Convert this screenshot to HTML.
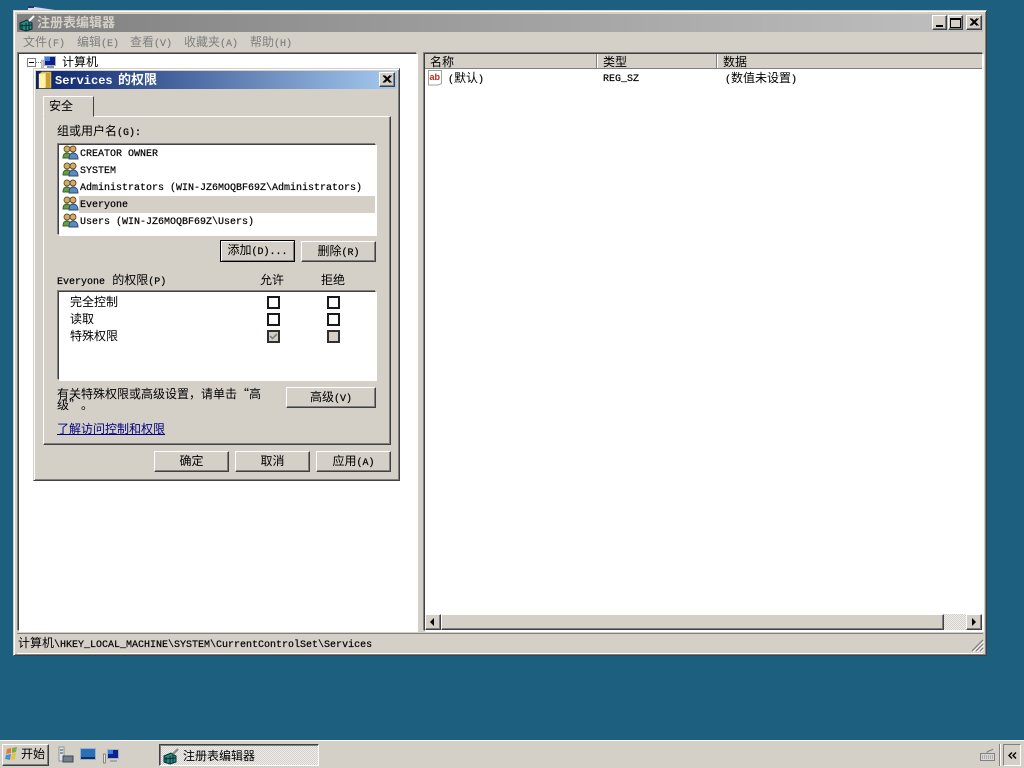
<!DOCTYPE html>
<html><head><meta charset="utf-8"><style>
html,body{margin:0;padding:0;width:1024px;height:768px;overflow:hidden;background:#1c5f7e}
*{box-sizing:border-box}
body{font-family:"Liberation Mono","WenQuanYi Zen Hei","Noto Sans CJK SC",monospace;font-size:12px;color:#000}
.a{position:absolute}
.t{position:absolute;white-space:nowrap;line-height:14px;height:14px}
.m{font-size:10px;-webkit-text-stroke:.2px currentColor}
.q{display:inline-block;width:12px;font-family:"WenQuanYi Zen Hei","Noto Sans CJK SC",sans-serif}
.raised{background:#d4d0c8;border:1px solid;border-color:#fff #404040 #404040 #fff;box-shadow:inset -1px -1px 0 #808080}
.sunk{background:#fff;border:1px solid;border-color:#404040 #fff #fff #404040;box-shadow:-1px -1px 0 #808080,1px 1px 0 #fff}
.btn{position:absolute;background:#d4d0c8;border:1px solid;border-color:#fff #404040 #404040 #fff;box-shadow:inset -1px -1px 0 #808080;text-align:center;line-height:21px;white-space:nowrap}
.cb{position:absolute;width:13px;height:13px;background:#fff;border:2px solid #1a1a1a}
.dither{background-color:#eee;background-image:linear-gradient(45deg,#d4d0c8 25%,transparent 25%,transparent 75%,#d4d0c8 75%),linear-gradient(45deg,#d4d0c8 25%,transparent 25%,transparent 75%,#d4d0c8 75%);background-size:2px 2px;background-position:0 0,1px 1px}
</style></head><body>

<svg class="a" style="left:27px;top:5px" width="30" height="6"><path d="M1 1 L28 5 L1 5Z" fill="#d8d8e8"/><path d="M1 1h6v2H1z" fill="#30306a"/></svg>

<!-- main window -->
<div class="a" style="left:13px;top:10px;width:974px;height:646px;background:#d4d0c8;border:1px solid;border-color:#d4d0c8 #404040 #404040 #d4d0c8;box-shadow:inset 1px 1px 0 #fff,inset -1px -1px 0 #808080"></div>
<div class="a" style="left:17px;top:14px;width:966px;height:18px;background:linear-gradient(90deg,#808080,#c0c0c0)"></div>
<svg class="a" style="left:19px;top:15px" width="16" height="17" viewBox="0 0 16 17"><path d="M1 8 L8 5 L13 8 L13 14 L7 16 L1 14Z" fill="#2a8a7a" stroke="#0b2b3a"/><path d="M3 9v6M7 8v8M10 7v8M1 11l12-1" stroke="#0b2b3a" fill="none"/><path d="M10 6 L15 1" stroke="#fff" stroke-width="2"/></svg>
<div class="t" style="left:37px;top:17px;color:#d4d0c8;font-weight:bold;font-size:13px">注册表编辑器</div>

<div class="btn" style="left:932px;top:15px;width:15px;height:15px"></div><div class="a" style="left:936px;top:25px;width:7px;height:2px;background:#000"></div>
<div class="btn" style="left:948px;top:15px;width:15px;height:15px"></div><div class="a" style="left:950px;top:18px;width:11px;height:10px;border:1px solid #000;border-top-width:2px"></div>
<div class="btn" style="left:966px;top:15px;width:16px;height:15px"></div>
<svg class="a" style="left:969px;top:18px" width="10" height="9"><path d="M1 0.5L8 7.5M2.5 0.5L9.5 7.5M8 0.5L1 7.5M9.5 0.5L2.5 7.5" stroke="#000" fill="none"/></svg>

<div class="t" style="left:23px;top:36px;color:#808080">文件<span class="m">(F)</span></div>
<div class="t" style="left:77px;top:36px;color:#808080">编辑<span class="m">(E)</span></div>
<div class="t" style="left:130px;top:36px;color:#808080">查看<span class="m">(V)</span></div>
<div class="t" style="left:184px;top:36px;color:#808080">收藏夹<span class="m">(A)</span></div>
<div class="t" style="left:250px;top:36px;color:#808080">帮助<span class="m">(H)</span></div>

<!-- tree -->
<div class="a sunk" style="left:18px;top:53px;width:399px;height:578px"></div>
<div class="a" style="left:27px;top:58px;width:9px;height:9px;border:1px solid #808080;background:#fff"></div>
<div class="a" style="left:29px;top:62px;width:5px;height:1px;background:#000"></div>
<svg class="a" style="left:36px;top:55px" width="22" height="14"><path d="M0 7.5h5" stroke="#808080" stroke-dasharray="1 1"/><rect x="5.500" y="5" width="2" height="8" fill="#c8d0d8" stroke="#888" stroke-width=".5"/><rect x="8.500" y="1.500" width="11" height="9" fill="#10208c" stroke="#a8b0c0"/><rect x="9" y="2" width="5" height="4" fill="#3a80e0"/><path d="M11 12h7" stroke="#8898a8" stroke-width="2"/></svg>
<div class="t" style="left:62px;top:56px">计算机</div>

<!-- list pane -->
<div class="a sunk" style="left:424px;top:53px;width:559px;height:578px"></div>
<div class="a" style="left:425px;top:54px;width:557px;height:15px;background:#d4d0c8;border-bottom:1px solid #808080"></div>
<div class="a" style="left:596px;top:54px;width:1px;height:14px;background:#808080"></div><div class="a" style="left:597px;top:54px;width:1px;height:14px;background:#fff"></div>
<div class="a" style="left:716px;top:54px;width:1px;height:14px;background:#808080"></div><div class="a" style="left:717px;top:54px;width:1px;height:14px;background:#fff"></div>
<div class="t" style="left:430px;top:56px">名称</div>
<div class="t" style="left:603px;top:56px">类型</div>
<div class="t" style="left:723px;top:56px">数据</div>
<svg class="a" style="left:427px;top:69px" width="17" height="17" viewBox="0 0 17 17"><path d="M1.500 1.500h13v13l-3 1.500h-10z" fill="#fff" stroke="#a0a0a0"/><text x="2.500" y="11" font-family="Liberation Sans" font-size="9" font-weight="bold" fill="#c02818">ab</text></svg>
<div class="t" style="left:448px;top:72px"><span class="m">(</span>默认<span class="m">)</span></div>
<div class="t m" style="left:603px;top:73px">REG_SZ</div>
<div class="t" style="left:725px;top:72px"><span class="m">(</span>数值未设置<span class="m">)</span></div>

<!-- scrollbar -->
<div class="a dither" style="left:425px;top:614px;width:557px;height:16px"></div>
<div class="btn" style="left:425px;top:614px;width:16px;height:16px"></div>
<svg class="a" style="left:430px;top:618px" width="6" height="8"><path d="M4 0v8L0 4z"/></svg>
<div class="btn" style="left:441px;top:614px;width:503px;height:16px"></div>
<div class="btn" style="left:966px;top:614px;width:16px;height:16px"></div>
<svg class="a" style="left:972px;top:618px" width="6" height="8"><path d="M0 0v8l4-4z"/></svg>

<!-- status -->
<div class="a" style="left:17px;top:633px;width:966px;height:21px;background:#d4d0c8;border-top:1px solid #808080;border-bottom:1px solid #fff"></div>
<div class="t" style="left:18px;top:637px">计算机<span class="m">\HKEY_LOCAL_MACHINE\SYSTEM\CurrentControlSet\Services</span></div>
<svg class="a" style="left:971px;top:639px" width="13" height="13"><path d="M1 12L12 1M5 12L12 5M9 12L12 9" stroke="#808080" stroke-width="1.300" fill="none"/><path d="M2 13L13 2M6 13L13 6M10 13L13 10" stroke="#fff" fill="none"/></svg>

<!-- dialog -->
<div class="a" style="left:33px;top:68px;width:367px;height:413px;background:#d4d0c8;border:1px solid;border-color:#d4d0c8 #404040 #404040 #d4d0c8;box-shadow:inset 1px 1px 0 #fff,inset -1px -1px 0 #808080"></div>
<div class="a" style="left:36px;top:71px;width:361px;height:18px;background:linear-gradient(90deg,#0a246a,#a6caf0)"></div>
<svg class="a" style="left:38px;top:71px" width="15" height="18"><path d="M1 3 L4 1 L13 1 L13 17 L1 17Z" fill="#f2d878" stroke="#a89040" stroke-width=".7"/><path d="M1 3h6v14H1z" fill="#fff2b0"/><path d="M8 2h4v15H8z" fill="#c8a030"/></svg>
<div class="t" style="left:55px;top:74px;color:#fff;font-weight:bold;font-size:13px;width:120px"><span style="font-size:12px">Services</span></div>
<div class="t" style="left:118px;top:74px;color:#fff;font-weight:bold;font-size:13px">的权限</div>
<div class="btn" style="left:379px;top:72px;width:16px;height:15px"></div>
<svg class="a" style="left:382px;top:75px" width="10" height="9"><path d="M1 0.500L8 7.500M2.500 0.500L9.500 7.500M8 0.500L1 7.500M9.500 0.500L2.500 7.500" stroke="#000" fill="none"/></svg>

<!-- tab panel -->
<div class="a" style="left:43px;top:116px;width:348px;height:329px;background:#d4d0c8;border:1px solid;border-color:#fff #404040 #404040 #fff;box-shadow:inset -1px -1px 0 #808080"></div>
<div class="a" style="left:43px;top:96px;width:51px;height:21px;background:#d4d0c8;border:1px solid;border-color:#fff #404040 #d4d0c8 #fff"></div>
<div class="t" style="left:49px;top:100px">安全</div>

<div class="t" style="left:57px;top:125px">组或用户名<span class="m">(G):</span></div>
<div class="a sunk" style="left:58px;top:144px;width:318px;height:91px"></div>
<div class="a" style="left:79px;top:196px;width:296px;height:17px;background:#d4d0c8"></div>
<svg width="0" height="0" style="position:absolute"><defs><g id="u"><circle cx="5" cy="4" r="3" fill="#d8a868" stroke="#5a5a2a" stroke-width=".9"/><path d="M1 13c0-4 2-5 4-5s4 1 4 5z" fill="#60a048" stroke="#3a5a2a" stroke-width=".9"/><circle cx="11" cy="4" r="3" fill="#d8a868" stroke="#5a4a2a" stroke-width=".9"/><path d="M7 14c0-5 2-6 4-6s5 1 5 6z" fill="#5a8ac0" stroke="#2a4a6a" stroke-width=".9"/></g></defs></svg>
<svg class="a" style="left:62px;top:145px" width="17" height="16"><use href="#u"/></svg>
<svg class="a" style="left:62px;top:162px" width="17" height="16"><use href="#u"/></svg>
<svg class="a" style="left:62px;top:179px" width="17" height="16"><use href="#u"/></svg>
<svg class="a" style="left:62px;top:196px" width="17" height="16"><use href="#u"/></svg>
<svg class="a" style="left:62px;top:213px" width="17" height="16"><use href="#u"/></svg>
<div class="t m" style="left:80px;top:148px">CREATOR OWNER</div>
<div class="t m" style="left:80px;top:165px">SYSTEM</div>
<div class="t m" style="left:80px;top:182px">Administrators (WIN-JZ6MOQBF69Z\Administrators)</div>
<div class="t m" style="left:80px;top:199px">Everyone</div>
<div class="t m" style="left:80px;top:216px">Users (WIN-JZ6MOQBF69Z\Users)</div>

<div class="btn" style="left:220px;top:240px;width:75px;height:22px;border:1px solid #000;box-shadow:inset 1px 1px 0 #fff,inset -1px -1px 0 #808080;line-height:21px">添加<span class="m">(D)...</span></div>
<div class="btn" style="left:301px;top:241px;width:75px;height:21px">删除<span class="m">(R)</span></div>

<div class="t" style="left:57px;top:274px"><span class="m">Everyone</span> 的权限<span class="m">(P)</span></div>
<div class="t" style="left:260px;top:274px">允许</div>
<div class="t" style="left:321px;top:274px">拒绝</div>

<div class="a sunk" style="left:58px;top:291px;width:318px;height:89px"></div>
<div class="t" style="left:70px;top:296px">完全控制</div>
<div class="t" style="left:70px;top:313px">读取</div>
<div class="t" style="left:70px;top:330px">特殊权限</div>
<div class="cb" style="left:267px;top:296px"></div>
<div class="cb" style="left:327px;top:296px"></div>
<div class="cb" style="left:267px;top:313px"></div>
<div class="cb" style="left:327px;top:313px"></div>
<div class="cb" style="left:267px;top:330px;background:#d4d0c8;border-color:#303030"></div>
<svg class="a" style="left:269px;top:332px" width="9" height="9"><path d="M1 4l2.500 2.500L8 2" stroke="#808080" stroke-width="1.600" fill="none"/></svg>
<div class="cb" style="left:327px;top:330px;background:#d4d0c8;border-color:#303030"></div>

<div class="t" style="left:57px;top:387px">有关特殊权限或高级设置，请单击<span class="q" style="text-align:right">“</span>高</div>
<div class="t" style="left:57px;top:398px">级<span class="q">”</span>。</div>
<div class="btn" style="left:286px;top:387px;width:90px;height:21px">高级<span class="m">(V)</span></div>
<div class="t" style="left:57px;top:423px;color:#000080;text-decoration:underline">了解访问控制和权限</div>

<div class="btn" style="left:154px;top:451px;width:75px;height:21px">确定</div>
<div class="btn" style="left:235px;top:451px;width:75px;height:21px">取消</div>
<div class="btn" style="left:316px;top:451px;width:75px;height:21px">应用<span class="m">(A)</span></div>

<!-- taskbar -->
<div class="a" style="left:0;top:740px;width:1024px;height:28px;background:#d4d0c8;border-top:1px solid #fff"></div>
<div class="btn" style="left:2px;top:744px;width:47px;height:22px"></div>
<svg class="a" style="left:4px;top:746px" width="16" height="17" viewBox="0 0 16 17"><path d="M3 3l4-1 0 5-5 1z" fill="#e87830"/><path d="M8 2l5-1-1 5-4 1z" fill="#78b040"/><path d="M2 9l5-1-1 6-5-1z" fill="#4890d8"/><path d="M8 8l4-1-1 6-4 1z" fill="#f0c030"/></svg>
<div class="t" style="left:21px;top:748px">开始</div>
<svg class="a" style="left:57px;top:746px" width="17" height="18"><path d="M2 1h5v14H2z" fill="#e0e4e8" stroke="#8898a0"/><path d="M3 4h3M3 7h3" stroke="#404850"/><rect x="6" y="10" width="10" height="6" fill="#708088" stroke="#404850"/></svg>
<svg class="a" style="left:80px;top:748px" width="16" height="13"><rect x=".5" y=".5" width="15" height="11" fill="#2a70b8" stroke="#9ab0c8"/><path d="M1 10h14" stroke="#10305a" stroke-width="2"/></svg>
<svg class="a" style="left:103px;top:749px" width="16" height="15"><rect x="0.500" y="5" width="2" height="9" fill="#e8e8d8" stroke="#888"/><rect x="4.500" y=".5" width="11" height="9" fill="#10208c" stroke="#a8b0c0"/><rect x="5" y="1" width="5" height="4" fill="#3a80e0"/><path d="M7 12h7" stroke="#a0a8b0" stroke-width="2"/></svg>
<div class="a dither" style="left:159px;top:744px;width:160px;height:22px;border:1px solid;border-color:#404040 #fff #fff #404040;box-shadow:inset 1px 1px 0 #808080"></div>
<svg class="a" style="left:163px;top:748px" width="16" height="17" viewBox="0 0 16 17"><path d="M1 8 L8 5 L13 8 L13 14 L7 16 L1 14Z" fill="#2a8a7a" stroke="#0b2b3a"/><path d="M3 9v6M7 8v8M10 7v8M1 11l12-1" stroke="#0b2b3a" fill="none"/><path d="M10 6 L15 1" stroke="#888" stroke-width="2"/></svg>
<div class="t" style="left:183px;top:750px">注册表编辑器</div>
<svg class="a" style="left:979px;top:747px" width="17" height="15"><path d="M1.500 6.500h14v7h-14z" fill="#d8d8d8" stroke="#808080"/><path d="M3 9h11M3 11h11" stroke="#808080" stroke-dasharray="1 1"/><path d="M8 6c0-3 3-1 6-4" stroke="#808080" fill="none"/></svg>
<div class="a" style="left:999px;top:744px;width:1px;height:22px;background:#808080"></div><div class="a" style="left:1000px;top:744px;width:1px;height:22px;background:#fff"></div>
<div class="a" style="left:1003px;top:744px;width:18px;height:22px;border:1px solid;border-color:#808080 #fff #fff #808080"></div>
<svg class="a" style="left:1008px;top:752px" width="9" height="7"><path d="M4 .5L1 3.500 4 6.500M8 .5L5 3.500 8 6.500" stroke="#000" stroke-width="1.400" fill="none"/></svg>
</body></html>
